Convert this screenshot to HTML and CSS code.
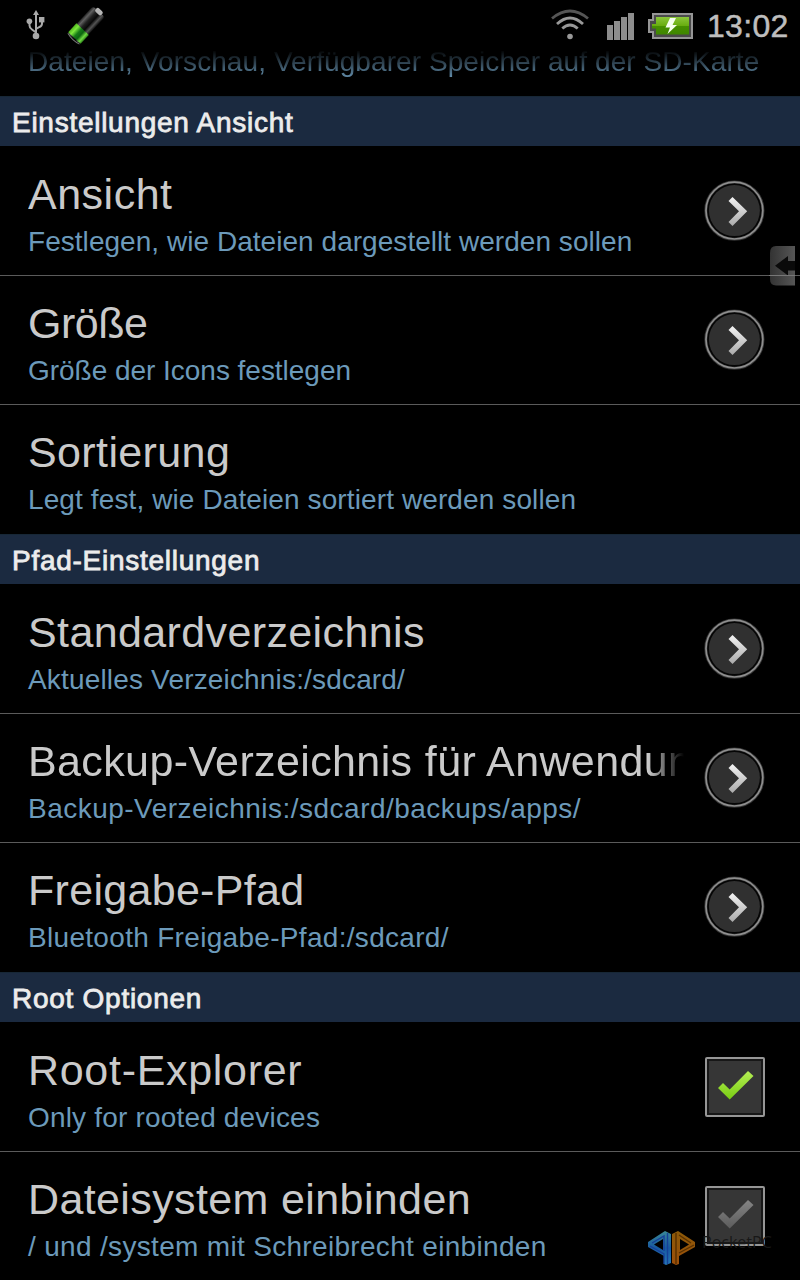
FILE: index.html
```
<!DOCTYPE html>
<html lang="de">
<head>
    <meta charset="UTF-8">
    <meta name="viewport" content="width=device-width, initial-scale=1.0">
    <title>Einstellungen</title>
    <link rel="stylesheet" href="styles.css">
</head>
<body>
    <!-- Shared icons -->
    <svg class="icon-defs" width="0" height="0" aria-hidden="true">
        <defs>
            <linearGradient id="silver" x1="0" y1="0" x2="0" y2="1">
                <stop offset="0" stop-color="#f4f4f4"/>
                <stop offset="1" stop-color="#aaa"/>
            </linearGradient>
            <linearGradient id="green" x1="0" y1="0" x2="0" y2="1">
                <stop offset="0" stop-color="#b5ee55"/>
                <stop offset="1" stop-color="#78cc12"/>
            </linearGradient>
            <linearGradient id="grey" x1="0" y1="0" x2="0" y2="1">
                <stop offset="0" stop-color="#858585"/>
                <stop offset="1" stop-color="#5c5c5c"/>
            </linearGradient>
            <linearGradient id="charge" x1="0" y1="0" x2="0" y2="1">
                <stop offset="0" stop-color="#8ac63a"/>
                <stop offset="0.5" stop-color="#68ad10"/>
                <stop offset="0.5" stop-color="#469000"/>
                <stop offset="1" stop-color="#3f8600"/>
            </linearGradient>
            <linearGradient id="tube" x1="0" y1="0" x2="1" y2="0">
                <stop offset="0" stop-color="#222"/>
                <stop offset="0.16" stop-color="#606060"/>
                <stop offset="0.38" stop-color="#222"/>
                <stop offset="0.62" stop-color="#080808"/>
                <stop offset="0.82" stop-color="#555"/>
                <stop offset="1" stop-color="#111"/>
            </linearGradient>
            <linearGradient id="fluid" x1="0" y1="0" x2="1" y2="0">
                <stop offset="0" stop-color="#4eb41c"/>
                <stop offset="0.2" stop-color="#7ee83c"/>
                <stop offset="0.45" stop-color="#157b17"/>
                <stop offset="0.65" stop-color="#0d6511"/>
                <stop offset="0.85" stop-color="#72dd43"/>
                <stop offset="1" stop-color="#2d8319"/>
            </linearGradient>
            <linearGradient id="tab" x1="0" y1="0" x2="1" y2="0">
                <stop offset="0" stop-color="#3c3c3c"/>
                <stop offset="1" stop-color="#656565"/>
            </linearGradient>
            <linearGradient id="blue" x1="0" y1="0" x2="0" y2="1">
                <stop offset="0" stop-color="#398896"/>
                <stop offset="0.5" stop-color="#1859a0"/>
                <stop offset="1" stop-color="#2678b4"/>
            </linearGradient>
            <linearGradient id="orange" x1="0" y1="0" x2="0" y2="1">
                <stop offset="0" stop-color="#8c5a08"/>
                <stop offset="1" stop-color="#9c4e0a"/>
            </linearGradient>
            <symbol id="arrow" viewBox="0 0 62 62">
                <circle cx="31.4" cy="30.6" r="28.6" fill="#050505" stroke="#333" stroke-width="3"/>
                <circle cx="31.4" cy="30.6" r="28.4" fill="none" stroke="#8e8e8e" stroke-width="1.7"/>
                <circle cx="31.4" cy="30.6" r="25.5" fill="#303030"/>
                <path d="M25.5 20.9 29.5 16.9 44.2 31.2 29.5 46 25.5 42 36 31.2Z" fill="url(#silver)"/>
            </symbol>
            <symbol id="tick" viewBox="0 0 60 60">
                <rect x="1" y="1" width="58" height="58" rx="1" fill="#171717" stroke="#969696" stroke-width="2"/>
                <rect x="4" y="4" width="52" height="52" fill="#363636"/>
                <path d="M13 31 18 26 24.7 32.5 43 14 48.5 19 24.7 42.5Z"/>
            </symbol>
        </defs>
    </svg>

    <!-- Status bar -->
    <header class="status-bar">
        <svg class="usb" width="20" height="32" viewBox="0 0 20 32">
            <g fill="none" stroke="#a9a9a9" stroke-width="2">
                <path d="M10 5V27M3.5 13V16.5Q3.5 19 6 20.5L10 23.5M16 12V14.5Q16 17 13.5 18L10 20"/>
            </g>
            <g fill="#a9a9a9">
                <path d="M10 1 13 6H7Z"/>
                <circle cx="3.4" cy="12.3" r="2.8"/>
                <rect x="13" y="8" width="5.4" height="5.4"/>
                <circle cx="10" cy="27" r="3.3"/>
            </g>
        </svg>
        <svg class="battery-app" width="44" height="44" viewBox="0 0 44 44">
            <g transform="translate(22 21.5) rotate(43)">
                <rect x="-8" y="-19" width="16" height="37" rx="3" fill="url(#tube)"/>
                <rect x="-4" y="-21.5" width="8" height="5" rx="2" fill="#b5b5b5"/>
                <rect x="-8.5" y="5" width="17" height="12" fill="url(#fluid)"/>
                <path d="M-8 18Q0 20.5 8 18" stroke="#777" fill="none"/>
            </g>
        </svg>
        <span class="spacer"></span>
        <svg class="wifi" width="38" height="32" viewBox="0 0 38 32">
            <g fill="none" stroke-width="2.8">
                <path d="M1 9.5Q19 -5.5 37 9.5" stroke="#555"/>
                <path d="M6 15Q19 3 32 15" stroke="#999"/>
                <path d="M11.3 19.5Q19 12.5 26.7 19.5" stroke="#999"/>
            </g>
            <circle cx="19" cy="27.5" r="2.8" fill="#999"/>
        </svg>
        <svg class="signal" width="28" height="28" viewBox="0 0 28 28" fill="#8d8d8d">
            <path d="M0 12H6V27H0ZM7 8H13V27H7ZM14 4H20V27H14ZM21 0H27V27H21Z"/>
        </svg>
        <svg class="battery" width="46" height="26" viewBox="0 0 46 26">
            <path d="M5 1H44V25H5V19H1V7H5Z" fill="#4a4a4a" stroke="#969696" stroke-width="2"/>
            <path d="M8 4H41V21.5H8V15.5H4V11H8Z" fill="url(#charge)"/>
            <path d="M22 5 17.5 14.5H22L19.5 21 29 12H24.5L28 5Z" fill="#f5fff0"/>
        </svg>
        <span class="clock">13:02</span>
    </header>

    <main class="settings">
        <div class="scrolled-row">
            <p class="summary s-scrolled">Dateien, Vorschau, Verfügbarer Speicher auf der SD-Karte</p>
        </div>

        <!-- View settings -->
        <section class="group">
            <h2 class="group-title">Einstellungen Ansicht</h2>
            <div class="row">
                <div class="text">
                    <h3 class="title t-view">Ansicht</h3>
                    <p class="summary s-view">Festlegen, wie Dateien dargestellt werden sollen</p>
                </div>
                <svg class="arrow"><use href="#arrow"/></svg>
            </div>
            <div class="row">
                <div class="text">
                    <h3 class="title t-size">Größe</h3>
                    <p class="summary s-size">Größe der Icons festlegen</p>
                </div>
                <svg class="arrow"><use href="#arrow"/></svg>
            </div>
            <div class="row">
                <div class="text">
                    <h3 class="title">Sortierung</h3>
                    <p class="summary s-sort">Legt fest, wie Dateien sortiert werden sollen</p>
                </div>
            </div>
        </section>

        <!-- Path settings -->
        <section class="group">
            <h2 class="group-title">Pfad-Einstellungen</h2>
            <div class="row">
                <div class="text">
                    <h3 class="title">Standardverzeichnis</h3>
                    <p class="summary s-default">Aktuelles Verzeichnis:/sdcard/</p>
                </div>
                <svg class="arrow"><use href="#arrow"/></svg>
            </div>
            <div class="row">
                <div class="text">
                    <h3 class="title faded">Backup-Verzeichnis für Anwendun</h3>
                    <p class="summary s-backup">Backup-Verzeichnis:/sdcard/backups/apps/</p>
                </div>
                <svg class="arrow"><use href="#arrow"/></svg>
            </div>
            <div class="row">
                <div class="text">
                    <h3 class="title t-share">Freigabe-Pfad</h3>
                    <p class="summary s-share">Bluetooth Freigabe-Pfad:/sdcard/</p>
                </div>
                <svg class="arrow"><use href="#arrow"/></svg>
            </div>
        </section>

        <!-- Root options -->
        <section class="group">
            <h2 class="group-title">Root Optionen</h2>
            <div class="row">
                <div class="text">
                    <h3 class="title t-root">Root-Explorer</h3>
                    <p class="summary s-root">Only for rooted devices</p>
                </div>
                <svg class="check checked"><use href="#tick"/></svg>
            </div>
            <div class="row">
                <div class="text">
                    <h3 class="title">Dateisystem einbinden</h3>
                    <p class="summary s-mount">/ und /system mit Schreibrecht einbinden</p>
                </div>
                <svg class="check"><use href="#tick"/></svg>
            </div>
        </section>
    </main>

    <!-- Pull-out tab at the screen edge -->
    <svg class="edge-tab" width="26" height="40" viewBox="0 0 26 40">
        <path d="M26 0H7Q1 0 1 7V33Q1 39.5 7 39.5H26Z" fill="url(#tab)" opacity="0.85"/>
        <path d="M6 19.7 19 10V15H26V24.5H19V29.5Z" fill="#0a0a0a"/>
        <path d="M0 29.5H26" stroke="#777"/>
    </svg>

    <!-- Watermark -->
    <div class="watermark">
        <svg width="48" height="36" viewBox="0 0 48 36">
            <path d="M0 12 17 1 23 4V33L18 35 16 34V26L0 17Z" fill="url(#blue)"/>
            <path d="M6 14.5 15 9V20Z" fill="#000"/>
            <path d="M2 16 16 24V34M19.5 3V34M4 13 16 6V21" fill="none" stroke="#164098" stroke-width="1.4"/>
            <path d="M24 4 30 1 47 12V17L31 26V34L28 35 24 33Z" fill="url(#orange)"/>
            <path d="M32 9 41 14.5 32 20Z" fill="#000"/>
            <path d="M28 3V34M31 23 46 15M31 5 43 13" fill="none" stroke="#573000" stroke-width="1.4"/>
        </svg>
        <span class="watermark-text">PocketPC</span>
    </div>
</body>
</html>
```

FILE: styles.css
```
/* Global Styles */
* {
    margin: 0;
    padding: 0;
    box-sizing: border-box;
}

:root {
    --bg-color: #000;
    --title-color: #cacaca;
    --summary-color: #6c9aba;
    --group-color: #1b2a40;
    --line-color: #5b5b5b;
}

body {
    position: relative;
    width: 800px;
    height: 1280px;
    overflow: hidden;
    background-color: var(--bg-color);
    color: var(--title-color);
    font-family: "Liberation Sans", Arial, sans-serif;
}

.icon-defs {
    position: absolute;
}

/* Status bar */
.status-bar {
    display: flex;
    align-items: flex-start;
    height: 50px;
    padding: 0 11px 0 26px;
}

.usb {
    margin-top: 9px;
}

.battery-app {
    margin: 4px 0 0 18px;
}

.spacer {
    flex: 1;
}

.wifi {
    margin: 9px 18px 0 0;
}

.signal {
    margin: 13px 13px 0 0;
}

.battery {
    margin: 13px 13px 0 0;
}

.clock {
    width: 82px;
    white-space: nowrap;
    font-size: 32px;
    line-height: 52px;
    letter-spacing: 0.3px;
    color: #bebebe;
    -webkit-text-stroke: 0.5px #bebebe;
}

/* Settings list */
.scrolled-row {
    height: 46px;
    padding-left: 28px;
    -webkit-mask-image: linear-gradient(transparent 0, #000 30px);
    mask-image: linear-gradient(transparent 0, #000 30px);
}

.group {
    margin-bottom: 1px;
}

.group-title {
    height: 50px;
    padding-left: 12px;
    border-top: 1px solid #172736;
    background-color: var(--group-color);
    color: #ececec;
    font-size: 28px;
    font-weight: normal;
    line-height: 51px;
    letter-spacing: 0.73px;
    -webkit-text-stroke: 0.8px #ececec;
}

.row {
    display: flex;
    height: 129px;
    padding: 24px 35px 0 28px;
}

.row + .row {
    padding-top: 23px;
    border-top: 1px solid var(--line-color);
}

.text {
    width: 656px;
    flex: none;
}

.title {
    overflow: hidden;
    white-space: nowrap;
    font-size: 43px;
    font-weight: normal;
    line-height: 48px;
    letter-spacing: 0.38px;
}

.summary {
    margin-top: 8px;
    white-space: nowrap;
    color: var(--summary-color);
    font-size: 28px;
    line-height: 32px;
}

.scrolled-row .summary {
    position: relative;
    top: -4px;
    margin-top: 0;
}

.faded {
    -webkit-mask-image: linear-gradient(to right, #000 620px, transparent 656px);
    mask-image: linear-gradient(to right, #000 620px, transparent 656px);
}

/* Tracking per line */
.t-view { letter-spacing: 0.5px; }
.t-size { letter-spacing: -0.5px; }
.t-share { letter-spacing: 0.3px; }
.t-root { letter-spacing: 0.7px; }
.s-scrolled { letter-spacing: 0.08px; }
.s-view { letter-spacing: 0.04px; }
.s-size { letter-spacing: -0.03px; }
.s-sort { letter-spacing: 0.11px; }
.s-default { letter-spacing: 0.17px; }
.s-backup { letter-spacing: 0.48px; }
.s-share { letter-spacing: 0.31px; }
.s-root { letter-spacing: 0.18px; }
.s-mount { letter-spacing: 0.32px; }

.arrow {
    width: 62px;
    height: 62px;
    margin: 10px 0 0 19px;
    flex: none;
}

.check {
    width: 60px;
    height: 60px;
    margin: 11px 0 0 21px;
    flex: none;
    fill: url(#grey);
}

.checked {
    fill: url(#green);
}

/* Overlays */
.edge-tab {
    position: absolute;
    top: 246px;
    left: 769px;
}

.watermark {
    position: absolute;
    top: 1230px;
    left: 648px;
    display: flex;
}

.watermark-text {
    margin-left: 6px;
    font-family: "Open Sans", sans-serif;
    font-size: 16px;
    line-height: 25px;
    color: #181818;
}
```
